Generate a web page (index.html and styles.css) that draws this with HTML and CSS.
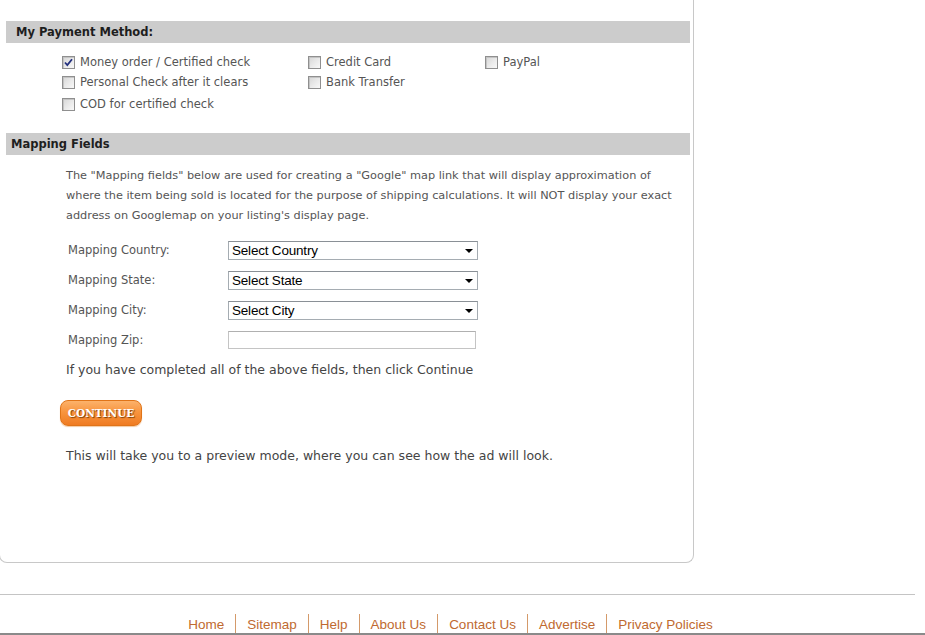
FILE: index.html
```html
<!DOCTYPE html>
<html lang="en">
<head>
  <meta charset="UTF-8" />
  <title>Post an Ad - Payment and Mapping</title>
  <link rel="stylesheet" href="styles.css">
</head>
<body>
  <div class="panel">
    <div class="bar bar-pay">My Payment Method:</div>
    <div class="pay-grid">
      <label class="opt"><span class="box"><svg width="11" height="11" viewBox="0 0 11 11"><path d="M2 5.5 L4.3 8 L9 2.2" fill="none" stroke="#23307e" stroke-width="1.8"/></svg></span>Money order / Certified check</label>
      <label class="opt"><span class="box"></span>Credit Card</label>
      <label class="opt"><span class="box"></span>PayPal</label>
      <label class="opt"><span class="box"></span>Personal Check after it clears</label>
      <label class="opt"><span class="box"></span>Bank Transfer</label>
      <span></span>
      <label class="opt opt-last"><span class="box"></span>COD for certified check</label>
    </div>

    <div class="bar bar-map">Mapping Fields</div>
    <p class="intro">The "Mapping fields" below are used for creating a "Google" map link that will display approximation of<br>where the item being sold is located for the purpose of shipping calculations. It will NOT display your exact<br>address on Googlemap on your listing's display page.</p>

    <div class="map-form">
      <span class="lbl">Mapping Country:</span>
      <span class="sel"><select><option>Select Country</option></select></span>
      <span class="lbl">Mapping State:</span>
      <span class="sel"><select><option>Select State</option></select></span>
      <span class="lbl">Mapping City:</span>
      <span class="sel"><select><option>Select City</option></select></span>
      <span class="lbl">Mapping Zip:</span>
      <span><input type="text" class="zip" /></span>
    </div>

    <p class="note">If you have completed all of the above fields, then click Continue</p>
    <button class="btn-continue">CONTINUE</button>
    <p class="note note-preview">This will take you to a preview mode, where you can see how the ad will look.</p>
  </div>

  <div class="rule"></div>
  <div class="footer">
    <div class="links">
      <a href="#">Home</a>
      <a href="#">Sitemap</a>
      <a href="#">Help</a>
      <a href="#">About Us</a>
      <a href="#">Contact Us</a>
      <a href="#">Advertise</a>
      <a href="#">Privacy Policies</a>
    </div>
  </div>
</body>
</html>
```

FILE: styles.css
```css
* {
  margin: 0;
  padding: 0;
  box-sizing: border-box;
}
body {
  background: #fff;
  font-family: "DejaVu Sans", Verdana, sans-serif;
  font-size: 11.5px;
  color: #555;
  overflow: hidden;
}
.panel {
  width: 695px;
  margin-left: -1px;
  padding: 21px 3px 96px 6px;
  border: 1px solid #c8c8c8;
  border-top: none;
  border-radius: 0 0 8px 8px;
}
.bar {
  height: 22px;
  line-height: 22px;
  background: #cccccc;
  color: #1e1e1e;
  font-weight: bold;
  font-size: 11.5px;
}
.bar-pay {
  padding-left: 10px;
}
.bar-map {
  margin-top: 21px;
  padding-left: 5px;
}
.pay-grid {
  display: grid;
  grid-template-columns: 246px 177px 1fr;
  grid-auto-rows: 20px;
  padding-left: 56px;
  margin-top: 9px;
}
.opt {
  display: flex;
  align-items: center;
  gap: 5px;
  height: 20px;
  color: #555;
}
.opt-last {
  margin-top: 2px;
}
.box {
  display: inline-flex;
  align-items: center;
  justify-content: center;
  width: 13px;
  height: 13px;
  border: 1px solid #8f8f8f;
  background: linear-gradient(135deg, #d6d6d6 0%, #ececec 60%, #f8f8f8 100%);
  box-shadow: inset 1px 1px 0 #c4c4c4;
}
.intro {
  margin-top: 11px;
  padding-left: 60px;
  line-height: 20px;
  font-size: 11.3px;
  color: #555;
  white-space: nowrap;
}
.map-form {
  display: grid;
  grid-template-columns: 160px 250px;
  grid-auto-rows: 30px;
  align-items: center;
  margin-top: 9px;
  padding-left: 62px;
}
.lbl {
  color: #555;
}
.sel {
  position: relative;
  display: block;
  width: 250px;
}
.sel select {
  appearance: none;
  -webkit-appearance: none;
  display: block;
  width: 250px;
  height: 19px;
  padding: 0 0 0 3px;
  border: 1px solid #a5acb2;
  border-top-color: #8a9096;
  background: #fff;
  font-family: "Liberation Sans", Arial, sans-serif;
  font-size: 13.5px;
  letter-spacing: -0.2px;
  color: #000;
  line-height: 17px;
}
.sel::after {
  content: "";
  position: absolute;
  right: 5px;
  top: 8px;
  border-left: 4px solid transparent;
  border-right: 4px solid transparent;
  border-top: 4px solid #000;
}
.zip {
  display: block;
  width: 248px;
  height: 18px;
  border: 1px solid #c4c4c4;
  border-top-color: #b0b0b0;
  background: #fff;
}
.note {
  margin-top: 5px;
  padding-left: 60px;
  line-height: 20px;
  font-size: 12.5px;
  color: #444;
}
.note-preview {
  margin-top: 20px;
}
.btn-continue {
  display: block;
  width: 82px;
  height: 26px;
  margin: 20px 0 0 54px;
  border: 1px solid #e07418;
  border-radius: 8px;
  background: linear-gradient(#fcb26b 0%, #f8953f 45%, #ef7b22 100%);
  box-shadow: 0 1px 1px #f3c9a2;
  color: #fff;
  font-family: "DejaVu Serif", Georgia, serif;
  font-weight: bold;
  font-size: 10.5px;
  text-shadow: 1px 1px 1px #7a3d08;
  cursor: pointer;
}
.rule {
  width: 915px;
  height: 1px;
  margin-top: 31px;
  background: #c4c4c4;
}
.footer {
  border-bottom: 2px solid #8a8a8a;
  margin-top: 19px;
}
.links {
  display: flex;
  justify-content: center;
  width: 901px;
  height: 19px;
}
.links a {
  padding: 0 11px;
  border-left: 1px solid #d49a6a;
  font-family: "Liberation Sans", Arial, sans-serif;
  font-size: 13.5px;
  line-height: 22px;
  color: #c06a30;
  text-decoration: none;
}
.links a:first-child {
  border-left: none;
}
```
